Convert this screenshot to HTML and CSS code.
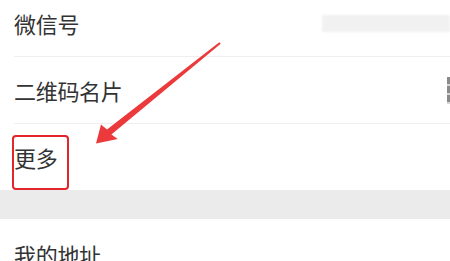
FILE: index.html
```html
<!DOCTYPE html>
<html lang="zh">
<head>
<meta charset="utf-8">
<link rel="stylesheet" href="styles.css">
</head>
<body>
<div class="page">
  <div class="group">
    <div class="row first">
      <span class="label">微信号</span>
      <span class="blurred"></span>
    </div>
    <div class="row">
      <span class="label">二维码名片</span>
      <span class="qr-edge"></span>
    </div>
    <div class="row last">
      <span class="label">更多</span>
    </div>
  </div>
  <div class="gap"></div>
  <div class="group">
    <div class="row last tall">
      <span class="label">我的地址</span>
    </div>
  </div>
  <div class="highlight"></div>
  <svg class="arrow" width="450" height="261" viewBox="0 0 450 261">
    <polygon points="219.3,42.2 220.7,43.8 111.4,134.6 117.8,139 96,143.5 101,124.4 107,129.4" fill="#ec3a3c"/>
  </svg>
</div>
</body>
</html>
```
FILE: styles.css
```css
html, body {
  margin: 0;
  padding: 0;
  background: #ffffff;
}
.page {
  position: relative;
  width: 450px;
  height: 261px;
  overflow: hidden;
  font-family: "Noto Sans CJK SC", "Noto Sans", sans-serif;
  color: #333333;
}
.group {
  display: flex;
  flex-direction: column;
}
.group:first-child {
  margin-top: -10px;
}
.row {
  display: flex;
  align-items: center;
  margin-left: 14px;
  height: 66px;
  border-bottom: 1px solid #eeeeee;
}
.row.last {
  border-bottom: none;
  height: 66px;
}
.row.tall {
  height: 70px;
}
.label {
  font-size: 22px;
  line-height: 1;
  letter-spacing: -0.3px;
}
.blurred {
  margin-left: auto;
  width: 128px;
  height: 17px;
  background: #f1f1f1;
  filter: blur(0.8px);
}
.qr-edge {
  margin-left: auto;
  width: 3px;
  height: 27px;
  background: repeating-linear-gradient(to bottom, #8a8a8a 0, #8a8a8a 7px, #d6d6d6 7px, #d6d6d6 9px);
}
.gap {
  height: 29px;
  background: #ebebeb;
}
.highlight {
  position: absolute;
  left: 12px;
  top: 135px;
  width: 53px;
  height: 51px;
  border: 2.5px solid #e2262b;
  border-radius: 4px;
}
.arrow {
  position: absolute;
  left: 0;
  top: 0;
}
```
